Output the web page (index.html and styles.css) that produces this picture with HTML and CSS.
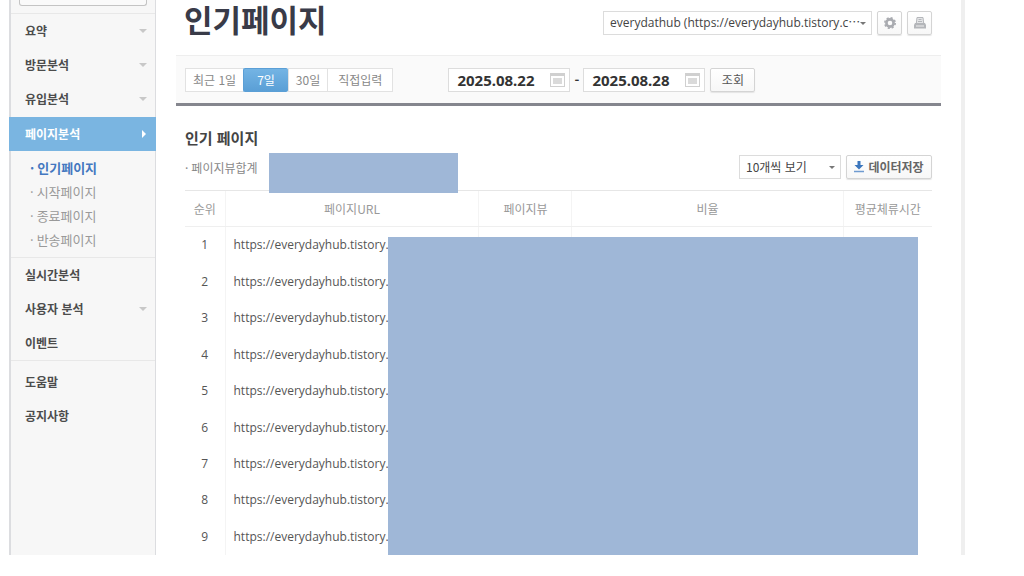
FILE: index.html
```
<!DOCTYPE html>
<html lang="ko">
<head>
<meta charset="utf-8">
<meta name="viewport" content="width=device-width, initial-scale=1">
<title>인기페이지</title>
<link rel="stylesheet" href="styles.css">
</head>
<body>
<div class="frame">
  <aside class="sidebar">
    <div class="side-search"><input type="text" class="side-search-input" aria-label="메뉴 검색"></div>
    <nav>
      <ul class="menu">
        <li><a href="#" class="menu-link has-sub">요약</a></li>
        <li><a href="#" class="menu-link has-sub">방문분석</a></li>
        <li><a href="#" class="menu-link has-sub">유입분석</a></li>
        <li>
          <a href="#" class="menu-link is-open">페이지분석</a>
          <ul class="submenu">
            <li><a href="#" class="submenu-link is-current">인기페이지</a></li>
            <li><a href="#" class="submenu-link">시작페이지</a></li>
            <li><a href="#" class="submenu-link">종료페이지</a></li>
            <li><a href="#" class="submenu-link">반송페이지</a></li>
          </ul>
        </li>
      </ul>
      <ul class="menu">
        <li><a href="#" class="menu-link">실시간분석</a></li>
        <li><a href="#" class="menu-link has-sub">사용자 분석</a></li>
        <li><a href="#" class="menu-link">이벤트</a></li>
      </ul>
      <ul class="menu menu-help">
        <li><a href="#" class="menu-link">도움말</a></li>
        <li><a href="#" class="menu-link">공지사항</a></li>
      </ul>
    </nav>
  </aside>
  <main class="main">
    <header class="page-head">
      <h1 class="page-title">인기페이지</h1>
      <div class="head-tools">
        <span class="select-wrap site-wrap">
          <select class="select site-select" aria-label="사이트 선택">
            <option>everydathub (https://everydayhub.tistory.c⋯</option>
          </select>
        </span>
        <button type="button" class="icon-button" aria-label="설정">
          <svg width="14" height="14" viewBox="0 0 14 14"><g fill="none" stroke="#a9abb0"><circle cx="7" cy="7" r="3.6" stroke-width="2.6"/><circle cx="7" cy="7" r="5.2" stroke-width="1.6" stroke-dasharray="2.1 1.98"/></g></svg>
        </button>
        <button type="button" class="icon-button" aria-label="인쇄">
          <svg width="14" height="14" viewBox="0 0 14 14"><path d="M4 1.5h6l.7 6H3.300z" fill="#e4e5e7" stroke="#b4b6ba"/><path d="M5.500 3.500h3M5 5.500h4" stroke="#b4b6ba"/><path d="M2 7h10l1 2v3.500H1V9z" fill="#b4b6ba"/><path d="M3 10h8" stroke="#eee"/></svg>
        </button>
      </div>
    </header>
    <form class="filter">
      <div class="range">
        <button type="button" class="range-button">최근 1일</button>
        <button type="button" class="range-button is-selected">7일</button>
        <button type="button" class="range-button">30일</button>
        <button type="button" class="range-button range-custom">직접입력</button>
      </div>
      <div class="dates">
        <label class="date-box">
          <input type="text" class="date-input" value="2025.08.22" aria-label="시작일">
          <svg width="15" height="14" viewBox="0 0 15 14"><rect x=".5" y=".5" width="14" height="13" fill="#fff" stroke="#d0d0d0"/><path d="M0 1.500h15" stroke="#d0d0d0" stroke-width="3"/><path d="M3 5h9v6H3z" fill="#dadada"/></svg>
        </label>
        <span class="dash">-</span>
        <label class="date-box">
          <input type="text" class="date-input" value="2025.08.28" aria-label="종료일">
          <svg width="15" height="14" viewBox="0 0 15 14"><rect x=".5" y=".5" width="14" height="13" fill="#fff" stroke="#d0d0d0"/><path d="M0 1.500h15" stroke="#d0d0d0" stroke-width="3"/><path d="M3 5h9v6H3z" fill="#dadada"/></svg>
        </label>
        <button type="submit" class="button search-button">조회</button>
      </div>
    </form>
    <section class="report">
      <h2 class="report-title">인기 페이지</h2>
      <div class="report-bar">
        <p class="total">페이지뷰합계</p>
        <span class="total-mask"></span>
        <div class="report-tools">
          <span class="select-wrap">
            <select class="select count-select" aria-label="표시 개수">
              <option>10개씩 보기</option>
            </select>
          </span>
          <button type="button" class="button save-button">
            <svg width="10" height="12" viewBox="0 0 10 12"><path d="M3.500 0h3v4H9.500L5 8.500.5 4h3z" fill="#3b76bd"/><path d="M0 10.500h10" stroke="#6f9bd0" stroke-width="1.500"/></svg>
            데이터저장
          </button>
        </div>
      </div>
      <div class="table-wrap">
        <table class="pages">
          <colgroup><col class="col-rank"><col class="col-url"><col class="col-views"><col class="col-ratio"><col class="col-time"></colgroup>
          <thead>
            <tr><th scope="col">순위</th><th scope="col">페이지URL</th><th scope="col">페이지뷰</th><th scope="col">비율</th><th scope="col">평균체류시간</th></tr>
          </thead>
          <tbody>
            <tr><td>1</td><td class="url">https://everydayhub.tistory.c</td><td></td><td></td><td></td></tr>
            <tr><td>2</td><td class="url">https://everydayhub.tistory.c</td><td></td><td></td><td></td></tr>
            <tr><td>3</td><td class="url">https://everydayhub.tistory.c</td><td></td><td></td><td></td></tr>
            <tr><td>4</td><td class="url">https://everydayhub.tistory.c</td><td></td><td></td><td></td></tr>
            <tr><td>5</td><td class="url">https://everydayhub.tistory.c</td><td></td><td></td><td></td></tr>
            <tr><td>6</td><td class="url">https://everydayhub.tistory.c</td><td></td><td></td><td></td></tr>
            <tr><td>7</td><td class="url">https://everydayhub.tistory.c</td><td></td><td></td><td></td></tr>
            <tr><td>8</td><td class="url">https://everydayhub.tistory.c</td><td></td><td></td><td></td></tr>
            <tr><td>9</td><td class="url">https://everydayhub.tistory.c</td><td></td><td></td><td></td></tr>
          </tbody>
        </table>
        <div class="table-mask"></div>
      </div>
    </section>
  </main>
</div>
</body>
</html>
```
FILE: styles.css
```
* { box-sizing: border-box; }

body {
  margin: 0;
  background: #fff;
  color: #555;
  font: 13px/20px "Noto Sans CJK KR", sans-serif;
}

h1, h2, p, ul { margin: 0; padding: 0; }
ul { list-style: none; }
a { color: inherit; text-decoration: none; }
button, input, select { margin: 0; font: inherit; color: inherit; }

.frame {
  display: flex;
  margin: 0 59px 0 9px;
  border-right: 4px solid #efefef;
}

/* Sidebar */
.sidebar {
  flex: none;
  width: 147px;
  background: #f7f7f7;
  border: solid #dcdde0;
  border-width: 0 1px 0 2px;
}

.side-search { padding: 0 8px 7px; }

.side-search-input {
  display: block;
  width: 100%;
  height: 6px;
  padding: 0;
  border: 1px solid #c4c4c4;
  border-top: 0;
  border-radius: 0 0 3px 3px;
  background: #fafafa;
}

.menu { border-top: 1px solid #e8e8e8; }
.menu-help { padding-top: 4px; }

.menu-link {
  display: flex;
  align-items: center;
  justify-content: space-between;
  height: 34px;
  padding: 0 8px 0 14px;
  color: #4c4c4c;
  font-size: 12px;
  font-weight: bold;
}

.has-sub::after {
  content: "";
  border: 4px solid transparent;
  border-top-color: #c8c8c8;
  border-bottom: 0;
}

.menu-link.is-open {
  margin: 1px -1px 0 -2px;
  padding: 0 10px 0 16px;
  background: #7ab5e1;
  color: #fff;
}

.is-open::after {
  content: "";
  border: 4px solid transparent;
  border-left-color: #fff;
  border-right: 0;
}

.submenu { padding: 5px 0; }

.submenu-link {
  display: block;
  padding: 2px 0 2px 19px;
  color: #999;
}

.submenu-link::before { content: "·"; margin-right: 3px; }
.submenu-link.is-current { color: #4478c0; font-weight: bold; }

/* Page header */
.main {
  flex: 1;
  min-width: 0;
  padding: 0 20px;
}

.page-head {
  display: flex;
  justify-content: space-between;
  height: 55px;
  padding: 0 9px 0 8px;
}

.page-title {
  color: #393b48;
  font-size: 31px;
  line-height: 38px;
}

.head-tools {
  display: flex;
  gap: 5px;
  padding-top: 11px;
}

.select-wrap { position: relative; }

.select-wrap::after {
  content: "";
  position: absolute;
  top: 11px;
  right: 6px;
  border: 3px solid transparent;
  border-top-color: #777;
  border-bottom: 0;
  pointer-events: none;
}

.select {
  height: 24px;
  padding: 0 6px;
  border: 1px solid #dcdcdc;
  border-radius: 0;
  background: #fff;
  color: #444;
  font-size: 12px;
  appearance: none;
}

.site-select {
  width: 269px;
  font-family: "Open Sans", "Noto Sans CJK KR", sans-serif;
}

.count-select { width: 102px; }

.icon-button,
.button {
  display: flex;
  align-items: center;
  justify-content: center;
  height: 24px;
  padding: 0;
  border: 1px solid #d4d4d4;
  border-radius: 2px;
  background: linear-gradient(#fff, #f7f7f7);
  box-shadow: 0 1px 1px #e4e4e4;
}

.icon-button { width: 25px; }

/* Period filter */
.filter {
  display: flex;
  gap: 55px;
  height: 51px;
  padding: 12px 9px 0;
  border-top: 1px solid #eee;
  border-bottom: 3px solid #85868e;
  background: #fafafa;
}

.range { display: flex; }

.range-button {
  height: 24px;
  padding: 0 7px;
  border: 1px solid #e2e2e2;
  border-right: 0;
  background: #fff;
  color: #888;
  font-size: 12px;
  line-height: 20px;
}

.range-button.is-selected {
  padding: 0 13px;
  border-color: #5b9fd6;
  border-radius: 2px;
  background: linear-gradient(#74b4e4, #5a9fd6);
  color: #fff;
}

.range-button.range-custom { padding: 0 10px; border-right: 1px solid #e2e2e2; }

.dates {
  display: flex;
  align-items: flex-start;
}

.date-box {
  display: flex;
  align-items: center;
  width: 122px;
  height: 24px;
  padding: 0 4px 0 8px;
  border: 1px solid #ddd;
  background: #fff;
}

.date-input {
  flex: 1;
  min-width: 0;
  padding: 0;
  border: 0;
  background: none;
  color: #333;
  font: bold 15px/20px "Noto Sans", sans-serif;
}

.dash {
  width: 13px;
  color: #333;
  font-weight: bold;
  line-height: 24px;
  text-align: center;
}

.search-button {
  width: 45px;
  margin-left: 5px;
  font-size: 12px;
}

/* Report */
.report { padding: 22px 9px 0; }

.report-title {
  color: #444;
  font-size: 15px;
  line-height: 20px;
}

.report-bar {
  display: flex;
  align-items: flex-start;
  height: 42px;
  padding-top: 5px;
}

.total { line-height: 30px; color: #888; font-size: 12px; }
.total::before { content: "·"; margin-right: 3px; }

.total-mask {
  position: relative;
  z-index: 1;
  width: 189px;
  height: 40px;
  margin-left: 11px;
  background: #9fb7d7;
}

.report-tools {
  display: flex;
  gap: 5px;
  margin-left: auto;
  padding-top: 2px;
}

.save-button {
  gap: 4px;
  width: 86px;
  font-size: 12px;
  font-weight: bold;
  color: #666;
}

.table-wrap { position: relative; }

.pages {
  width: 100%;
  height: 365px;
  border-collapse: collapse;
  table-layout: fixed;
}

.col-rank { width: 40px; }
.col-url { width: 34%; }
.col-views { width: 93px; }
.col-time { width: 89px; }

.pages th,
.pages td {
  padding: 0;
  border-left: 1px solid #f4f4f4;
  text-align: center;
}

.pages td { font: 12px/20px "Open Sans", "Noto Sans CJK KR", sans-serif; }

.pages th:first-child,
.pages td:first-child { border-left: 0; }

.pages th {
  height: 36px;
  border-top: 1px solid #e6e6e6;
  border-bottom: 1px solid #efefef;
  color: #999;
  font-size: 12px;
  font-weight: normal;
}

.pages .url {
  padding-left: 8px;
  overflow: hidden;
  text-align: left;
  white-space: nowrap;
}

.table-mask {
  position: absolute;
  top: 47px;
  right: 14px;
  bottom: 0;
  left: 203px;
  background: #9fb7d7;
}
```
